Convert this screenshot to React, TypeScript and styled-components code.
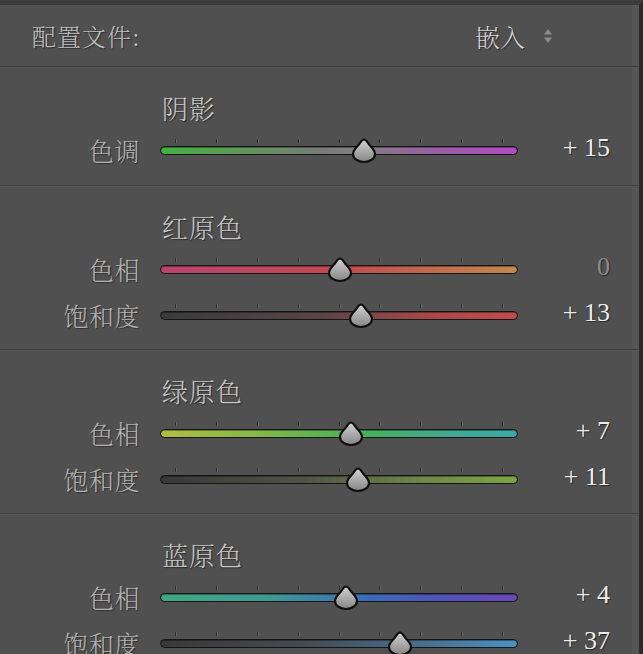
import React from "react";
import styled, { createGlobalStyle } from "styled-components";

const Global = createGlobalStyle`
  html, body { margin: 0; padding: 0; background: #505050; }
  #root { width: 643px; height: 654px; overflow: hidden; }
`;

const CJK = `"Noto Serif CJK SC", "Noto Sans CJK SC", serif`;
const NUM = `"Liberation Serif", "Noto Serif CJK SC", "Noto Sans CJK SC", serif`;

const Panel = styled.div`
  width: 643px;
  height: 654px;
  box-sizing: border-box;
  background: #505050;
  border-top: 5px solid #3d3d3d;
  border-right: 4px solid #2a2a2a;
  box-shadow: inset -7px 0 0 #555555;
  overflow: hidden;
  font-family: ${CJK};
`;

const Header = styled.div`
  height: 61px;
  display: flex;
  align-items: center;
  justify-content: space-between;
  padding: 0 86px 0 32px;
`;

const HeaderLabel = styled.span`
  font-size: 24px;
  font-weight: 300;
  color: #bdbdbd;
  text-shadow: 1px 1px 1px rgba(0, 0, 0, 0.45);
  letter-spacing: 1px;
`;

const Select = styled.div`
  display: flex;
  align-items: center;
  gap: 18px;
`;

const SelectText = styled.span`
  font-size: 25px;
  font-weight: 300;
  color: #d4d4d4;
  text-shadow: 1px 1px 1px rgba(0, 0, 0, 0.5);
`;

const Section = styled.section<{ $pb?: number }>`
  border-top: 1px solid #3f3f3f;
  box-shadow: inset 0 1px 0 #575757;
  padding: 20px 0 ${(p) => p.$pb ?? 11}px;
`;

const Title = styled.div`
  height: 40px;
  display: flex;
  align-items: center;
  padding-left: 162px;
  font-size: 26px;
  font-weight: 300;
  color: #c6c6c6;
  letter-spacing: 1px;
  text-shadow: 1px 1px 1px rgba(0, 0, 0, 0.45);
`;

const Row = styled.div`
  height: 46px;
  display: grid;
  grid-template-columns: 140px 358px 1fr;
  column-gap: 20px;
  align-items: center;
  padding-right: 29px;
`;

const Label = styled.span`
  text-align: right;
  font-size: 25px;
  font-weight: 300;
  color: #b2b2b2;
  text-shadow: 1px 1px 1px rgba(0, 0, 0, 0.4);
  letter-spacing: 0.5px;
  padding-bottom: 1px;
  white-space: nowrap;
`;

const Value = styled.span<{ $dim?: boolean }>`
  text-align: right;
  font-family: ${NUM};
  font-size: 26px;
  color: ${(p) => (p.$dim ? "#8b8b8b" : "#ececec")};
  text-shadow: 1px 1px 1px rgba(0, 0, 0, 0.5);
  white-space: pre;
  padding-bottom: 4px;
`;

const SliderBox = styled.div`
  position: relative;
  height: 46px;
  box-sizing: border-box;
  padding-bottom: 7px;
  display: flex;
  flex-direction: column;
  justify-content: center;
`;

const Ticks = styled.div`
  height: 4px;
  margin-bottom: 3px;
  padding: 0 14px 0 15px;
  display: flex;
  justify-content: space-between;
`;

const Tick = styled.span`
  width: 2px;
  height: 4px;
  background: linear-gradient(to right, #2c2c2c 50%, #666 50%);
`;

const Track = styled.div<{ $bg: string }>`
  height: 9px;
  box-sizing: border-box;
  border: 1.5px solid #151515;
  border-radius: 5px;
  background: ${(p) => p.$bg};
  box-shadow: inset 0 1px 0 rgba(0, 0, 0, 0.35);
`;

const Thumb = styled.svg`
  position: absolute;
  top: 11px;
  width: 26px;
  height: 25px;
  overflow: visible;
`;

const Arrows = () => (
  <svg width="10" height="16" viewBox="0 0 10 16">
    <path d="M5 1 L9 6.5 L1 6.5 Z" fill="#8a8a8a" />
    <path d="M5 15 L9 9.5 L1 9.5 Z" fill="#8a8a8a" />
  </svg>
);

type SliderProps = { value: number; bg: string; label: string };

const Slider = ({ value, bg, label }: SliderProps) => {
  const left = 15 + ((value + 100) / 200) * 329 - 13;
  const text = value === 0 ? "0" : `+ ${value}`;
  const id = `g${label}${value}`;
  return (
    <Row>
      <Label>{label}</Label>
      <SliderBox>
        <Ticks>
          {Array.from({ length: 9 }).map((_, i) => (
            <Tick key={i} />
          ))}
        </Ticks>
        <Track $bg={bg} />
        <Thumb viewBox="0 0 26 25" style={{ left }}>
          <defs>
            <linearGradient id={id} x1="0" y1="0" x2="0" y2="1">
              <stop offset="0" stopColor="#d2d2d2" />
              <stop offset="0.55" stopColor="#a8a8a8" />
              <stop offset="1" stopColor="#858585" />
            </linearGradient>
          </defs>
          <path
            d="M13 1.5 C15.5 1.5 16.5 4.5 18.5 7 C21.5 10 24 12.5 24 16 A11 8 0 0 1 2 16 C2 12.5 4.5 10 7.5 7 C9.5 4.5 10.5 1.5 13 1.5 Z"
            fill={`url(#${id})`}
            stroke="#0f0f0f"
            strokeWidth="2.2"
            strokeLinejoin="round"
          />
        </Thumb>
      </SliderBox>
      <Value $dim={value === 0}>{text}</Value>
    </Row>
  );
};

const G = {
  tint: "linear-gradient(to right, #45b040 0%, #5c9a55 20%, #7a7a7a 45%, #808080 55%, #9a5ea6 78%, #b04cc2 100%)",
  redHue: "linear-gradient(to right, #bb4471 0%, #c14a50 50%, #c2884e 100%)",
  redSat: "linear-gradient(to right, #3a3a3a 0%, #5a4545 45%, #a84848 75%, #c24c4c 100%)",
  greenHue: "linear-gradient(to right, #b2bd44 0%, #7eb84a 30%, #48b052 55%, #42a890 80%, #40a8a8 100%)",
  greenSat: "linear-gradient(to right, #393939 0%, #4f5445 40%, #6f8a48 75%, #7ca640 100%)",
  blueHue: "linear-gradient(to right, #40a882 0%, #3f9a92 30%, #3a6cb6 58%, #5252b8 80%, #6c48b8 100%)",
  blueSat: "linear-gradient(to right, #393939 0%, #434b52 40%, #4a7090 75%, #4a92c4 100%)",
};

export default function App() {
  return (
    <>
      <Global />
      <Panel>
        <Header>
          <HeaderLabel>配置文件:</HeaderLabel>
          <Select>
            <SelectText>嵌入</SelectText>
            <Arrows />
          </Select>
        </Header>
        <Section $pb={12}>
          <Title>阴影</Title>
          <Slider label="色调" value={15} bg={G.tint} />
        </Section>
        <Section>
          <Title>红原色</Title>
          <Slider label="色相" value={0} bg={G.redHue} />
          <Slider label="饱和度" value={13} bg={G.redSat} />
        </Section>
        <Section>
          <Title>绿原色</Title>
          <Slider label="色相" value={7} bg={G.greenHue} />
          <Slider label="饱和度" value={11} bg={G.greenSat} />
        </Section>
        <Section>
          <Title>蓝原色</Title>
          <Slider label="色相" value={4} bg={G.blueHue} />
          <Slider label="饱和度" value={37} bg={G.blueSat} />
        </Section>
      </Panel>
    </>
  );
}
